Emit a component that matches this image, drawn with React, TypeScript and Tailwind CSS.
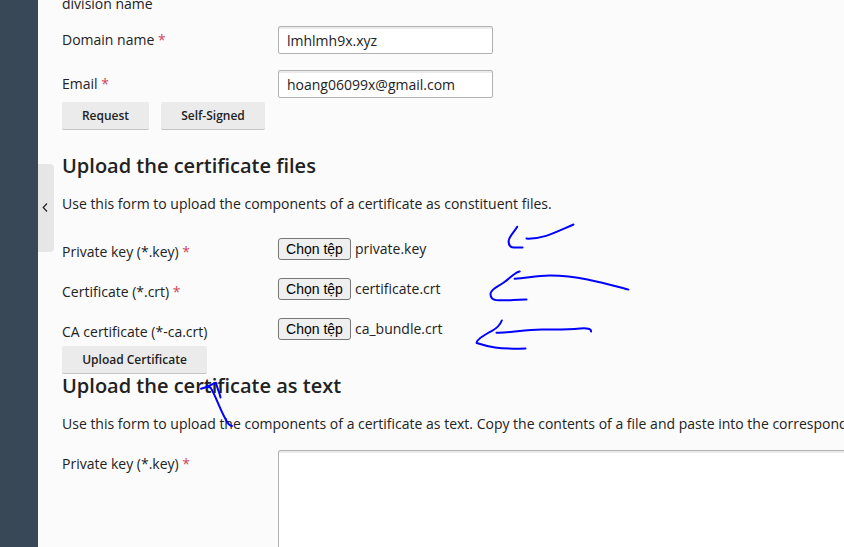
import type { ReactNode } from "react";

const uiFont = "font-['Open_Sans','Noto_Sans',sans-serif]";

function Label({ children, required }: { children: ReactNode; required?: boolean }) {
  return (
    <label className="w-[216px] shrink-0 whitespace-nowrap pt-1">
      {children}
      {required && <span className="text-[#d0455c]"> *</span>}
    </label>
  );
}

function TextRow({ label, value }: { label: string; value: string }) {
  return (
    <div className="flex h-7 items-start">
      <Label required>{label}</Label>
      <input
        type="text"
        defaultValue={value}
        className="h-7 w-[215px] rounded-xs border border-[#b2b2b2] bg-white px-2 pt-px shadow-[inset_0_2px_0_#ebebeb] outline-none"
      />
    </div>
  );
}

function FileRow({ label, file, required }: { label: string; file: string; required?: boolean }) {
  return (
    <div className="flex h-7 items-start">
      <Label required={required}>{label}</Label>
      <div className="flex items-start gap-1">
        <button
          type="button"
          className="h-[22px] w-[73px] whitespace-nowrap rounded-[3px] border border-[#767676] bg-[#efefef] text-center font-['Liberation_Sans',Arial,sans-serif] text-[14px] leading-5 text-black"
        >
          Chọn tệp
        </button>
        <span className="pt-px">{file}</span>
      </div>
    </div>
  );
}

function Button({ children, className }: { children: ReactNode; className: string }) {
  return (
    <button
      type="button"
      className={`h-7 shrink-0 whitespace-nowrap rounded-xs border-b border-[#c4c4c4] bg-[#ebebeb] text-[12px] font-semibold leading-[27px] text-[#222] ${className}`}
    >
      {children}
    </button>
  );
}

function Heading({ children }: { children: ReactNode }) {
  return <h2 className="h-6 whitespace-nowrap text-[20px] font-semibold leading-6 text-[#222]">{children}</h2>;
}

function PenMarks() {
  return (
    <svg
      className="pointer-events-none absolute inset-0"
      width="844"
      height="547"
      viewBox="0 0 844 547"
      fill="none"
      stroke="#0000fe"
      strokeWidth="2"
      strokeLinecap="round"
      strokeLinejoin="round"
    >
      <path d="M517.200 226.700 C515 231 509 236.500 508.600 241 C508.600 245 510.500 247.500 514 247.500 H522.500" />
      <path d="M526.500 238.600 C543 239.200 555 232.500 573.500 224.500" />
      <path d="M519.700 271.500 C514 272.500 511 278 503 283 C497 287 491 289 490.500 293.500 C490.500 300 495 300.200 501 300.300 C510 300.500 516 299.500 526.500 299.600" />
      <path d="M514.600 278.700 C527 278.200 535 275.500 550 275.500 C579 275.700 602 282.500 628.500 289.600" />
      <path d="M501.800 320.500 C500 325 497.500 328 492 330.800 C484 335 476 339.500 476.700 343 C489 347 497 349 525.500 348.600" />
      <path d="M496.500 332.700 C511 333.200 523 329.400 542 329.400 C558 329.700 569 329.600 580 328.500 C587 328 591.500 328.500 591 331.500" />
      <path d="M201 388.700 L206.500 387 L216 382.700 C216.500 387 219.500 392 220.500 397.500" />
      <path d="M206.500 386.500 L210.500 387.500 C216 396 220.500 411.500 227.500 422.500 C229 425.500 230 425.300 232 426" />
    </svg>
  );
}

export default function App() {
  return (
    <div className={`relative flex h-[547px] w-[844px] overflow-hidden bg-[#fbfbfb] text-[14px] leading-5 text-[#222] ${uiFont}`}>
      <aside className="w-[38px] shrink-0 bg-[#394857]" />
      <div className="flex w-4 shrink-0 flex-col">
        <button
          type="button"
          aria-label="Collapse"
          className="mt-[164px] flex h-[88px] w-4 items-center justify-start rounded-r-[4px] bg-[#e6e6e6] pb-px pl-1"
        >
          <svg width="7" height="9" viewBox="0 0 7 9" fill="none" stroke="#222" strokeWidth="1.200">
            <path d="M5 .5 1.200 4.500 5 8.500" />
          </svg>
        </button>
      </div>
      <main className="ml-2 flex min-w-0 flex-1 flex-col">
        <div className="-mt-1.5 h-8 shrink-0">division name</div>
        <div className="flex flex-col gap-4">
          <TextRow label="Domain name" value="lmhlmh9x.xyz" />
          <TextRow label="Email" value="hoang06099x@gmail.com" />
        </div>
        <div className="mt-1 flex gap-3">
          <Button className="w-[87px]">Request</Button>
          <Button className="w-[104px]">Self-Signed</Button>
        </div>
        <section className="mt-6 flex flex-col">
          <Heading>Upload the certificate files</Heading>
          <p className="mt-4 whitespace-nowrap">
            Use this form to upload the components of a certificate as constituent files.
          </p>
          <div className="mt-6 flex flex-col gap-3">
            <FileRow label="Private key (*.key)" file="private.key" required />
            <FileRow label="Certificate (*.crt)" file="certificate.crt" required />
            <FileRow label="CA certificate (*-ca.crt)" file="ca_bundle.crt" />
          </div>
          <Button className="w-[145px] self-start">Upload Certificate</Button>
        </section>
        <section className="flex flex-col">
          <Heading>Upload the certificate as text</Heading>
          <p className="mt-4 whitespace-nowrap">
            Use this form to upload the components of a certificate as text. Copy the contents of a file and paste into the corresponding fields.
          </p>
          <div className="mt-4 flex items-start">
            <Label required>Private key (*.key)</Label>
            <textarea className="h-[120px] w-[600px] shrink-0 resize-none rounded-xs border border-[#b2b2b2] bg-white shadow-[inset_0_2px_0_#ebebeb] outline-none" />
          </div>
        </section>
      </main>
      <PenMarks />
    </div>
  );
}
